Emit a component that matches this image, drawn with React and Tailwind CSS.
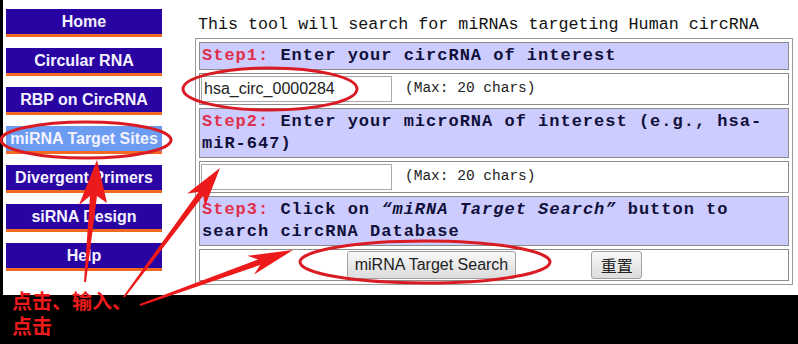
import React from 'react'

const navItems = [
  'Home',
  'Circular RNA',
  'RBP on CircRNA',
  'miRNA Target Sites',
  'Divergent Primers',
  'siRNA Design',
  'Help',
]

const mono = { fontFamily: '"Liberation Mono", "Noto Sans CJK SC", monospace' }

function StepHeader({ step, children }) {
  return (
    <div className="border border-[#8c8c8c] bg-[#ccccff] px-[2px] pt-[2px] pb-[1px] text-[17px] leading-[22.5px] font-bold tracking-[1px] text-[#10103a]" style={mono}>
      <span className="text-[#e0304c]">{step}:</span> {children}
    </div>
  )
}

function InputRow({ value }) {
  return (
    <div className="flex h-[32px] items-center border border-[#8c8c8c] bg-white px-[1px]">
      <input
        type="text"
        defaultValue={value}
        className="h-[26px] w-[191px] border border-[#a8a8a8] bg-white px-[2px] text-[16px] text-[#222] outline-none"
        style={{ fontFamily: '"Liberation Sans", Arial, sans-serif' }}
      />
      <span className="ml-[13px] text-[14.5px] text-[#222]" style={mono}>(Max: 20 chars)</span>
    </div>
  )
}

export default function App() {
  return (
    <div className="relative h-[344px] w-[798px] overflow-hidden bg-black">
      <div className="ml-[3px] flex h-[295px] bg-white">
        {/* Sidebar */}
        <div className="flex w-[192px] flex-col gap-[11px] pl-[3px] pt-[9px]">
          {navItems.map(item => (
            <div
              key={item}
              className={`flex h-[28px] w-[156px] items-center justify-center border-b-[3px] border-[#f06a22] text-[16px] font-bold whitespace-nowrap text-[#f4f2ff] ${item === 'miRNA Target Sites' ? 'bg-[#6c9cf2]' : 'bg-[#2a04a2]'}`}
              style={{ fontFamily: '"Liberation Sans", Arial, sans-serif' }}
            >
              {item}
            </div>
          ))}
        </div>

        {/* Main */}
        <div className="w-[598px] pt-[15px]">
          <div className="pl-[3px] text-[16.7px] leading-[20px] text-[#111]" style={mono}>
            This tool will search for miRNAs targeting Human circRNA
          </div>
          <div className="mt-[3px] flex flex-col gap-[3px] border border-[#9a9a9a] p-[3px]">
            <StepHeader step="Step1">Enter your circRNA of interest</StepHeader>
            <InputRow value="hsa_circ_0000284" />
            <StepHeader step="Step2">
              Enter your microRNA of interest (e.g., hsa-<br />miR-647)
            </StepHeader>
            <InputRow value="" />
            <StepHeader step="Step3">
              Click on <i>“miRNA Target Search”</i> button to<br />search circRNA Database
            </StepHeader>
            <div className="flex h-[32px] items-center justify-center gap-[75px] border border-[#8c8c8c] bg-white pl-[1px]">
              <button
                className="h-[28px] rounded-[3px] border border-[#a0a0a0] bg-gradient-to-b from-[#f8f8f8] to-[#dcdcdc] px-[7px] text-[16px] text-[#222]"
                style={{ fontFamily: '"Liberation Sans", Arial, sans-serif' }}
              >
                miRNA Target Search
              </button>
              <button
                className="h-[28px] w-[51px] rounded-[3px] border border-[#a0a0a0] bg-gradient-to-b from-[#f8f8f8] to-[#dcdcdc] text-[16px] text-[#222]"
                style={{ fontFamily: '"Noto Sans CJK SC", sans-serif' }}
              >
                重置
              </button>
            </div>
          </div>
        </div>
      </div>

      {/* Annotations */}
      <svg className="pointer-events-none absolute inset-0" width="798" height="344" viewBox="0 0 798 344">
        <g fill="none" stroke="#d91c24" strokeWidth="3">
          <ellipse cx="86" cy="140" rx="85" ry="18" />
          <ellipse cx="270" cy="89" rx="87" ry="21" />
          <ellipse cx="425" cy="262" rx="125" ry="21" />
        </g>
        <g fill="#ec1a1a">
          <polygon points="97,160 107,203 97,196 86,282 84,282 90,196 79,205" />
          <polygon points="220,168 204.9,206.7 203.3,195.5 124.8,297.5 123.2,296.5 198.5,191.9 187.3,193.5" />
          <polygon points="293,250 254.1,274.6 260.1,265 140.3,305.9 139.7,304.1 258.1,259.4 247.3,255.8" />
        </g>
      </svg>
      <div
        className="absolute left-[12px] top-[288px] text-[20px] leading-[25px] font-bold text-[#ec1a1a]"
        style={{ fontFamily: '"Noto Sans CJK SC", sans-serif' }}
      >
        点击、输入、<br />点击
      </div>
    </div>
  )
}
